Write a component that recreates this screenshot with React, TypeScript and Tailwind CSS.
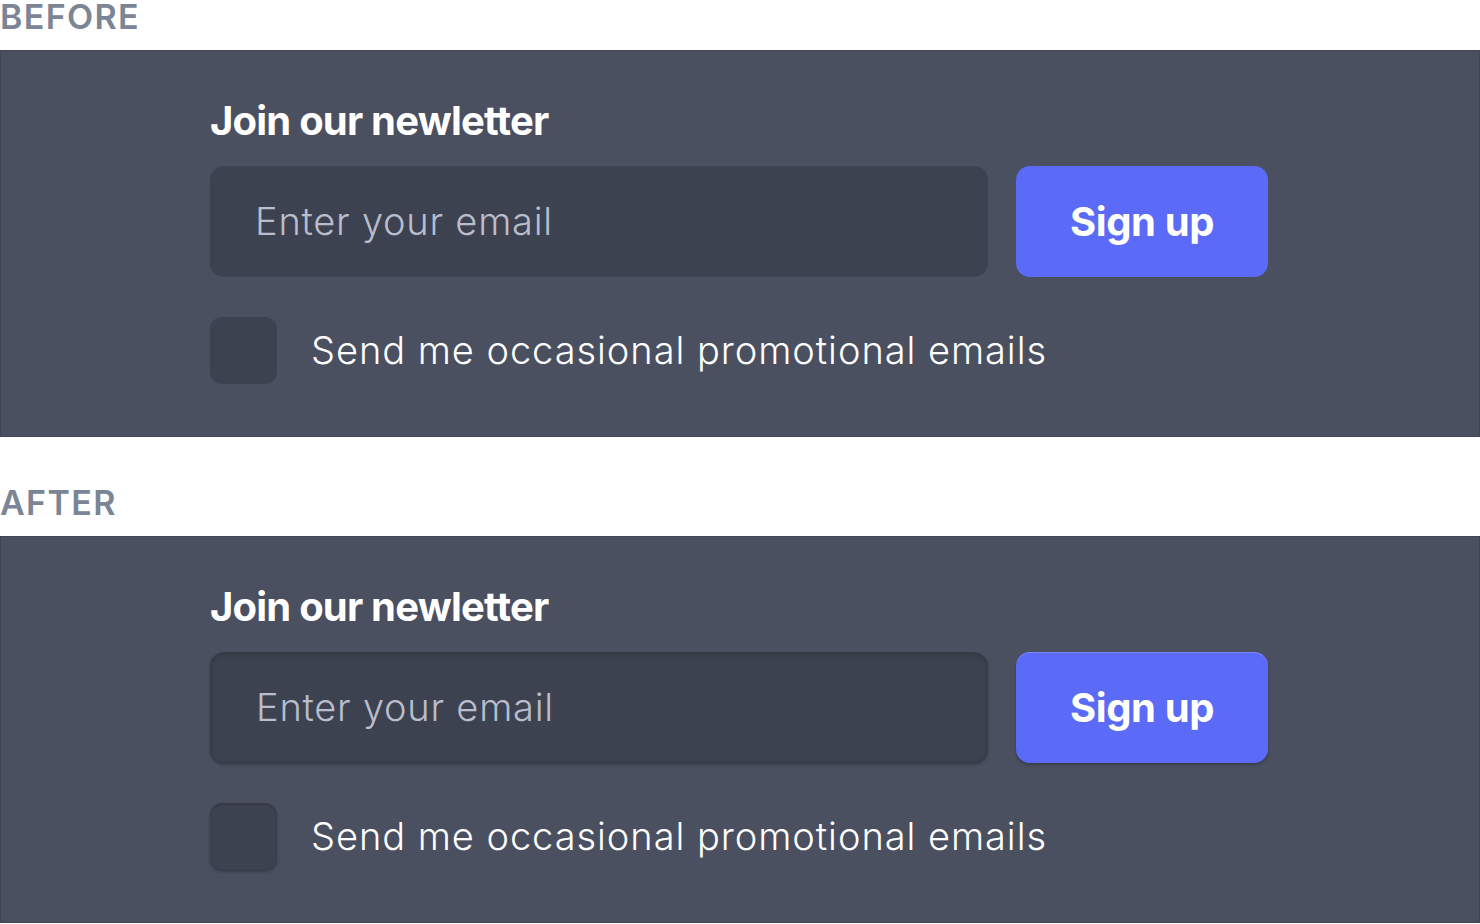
import React from "react";

const font = { fontFamily: "Inter, 'Noto Sans', sans-serif" };

function Label({ text }: { text: string }) {
  return (
    <div className="h-[50px] text-[34px] leading-[34px] font-semibold tracking-[0.04em] text-[#7b8595]">
      {text}
    </div>
  );
}

function Newsletter({ after }: { after?: boolean }) {
  return (
    <div className="h-[387px] bg-[#4a5060] border border-[#404553] pl-[209px] pt-[50px]">
      <h2 className="text-[40px] leading-[40px] font-bold tracking-[-0.02em] text-white">
        Join our newletter
      </h2>
      <div className="mt-[25px] flex gap-[28px]">
        <div
          className={
            "w-[778px] h-[111px] rounded-[14px] bg-[#3d4250] flex items-center pl-[45px] " +
            (after
              ? "border border-[#363b48] shadow-[0_2px_3px_rgba(0,0,0,0.25),inset_0_2px_4px_rgba(0,0,0,0.15)]"
              : "")
          }
        >
          <span className="text-[38px] font-light text-[#b9bdcc] tracking-[0.02em]">Enter your email</span>
        </div>
        <button
          className={
            "w-[252px] h-[111px] rounded-[14px] bg-[#5b6bf8] text-white text-[40px] font-bold tracking-[-0.01em] " +
            (after ? "shadow-[0_2px_3px_rgba(0,0,0,0.25),inset_0_1px_0_rgba(255,255,255,0.2)]" : "")
          }
        >
          Sign up
        </button>
      </div>
      <div className="mt-[40px] flex items-center gap-[34px]">
        <div
          className={
            "w-[67px] h-[67px] rounded-[12px] bg-[#3d4250] " +
            (after ? "shadow-[0_2px_3px_rgba(0,0,0,0.25),inset_0_2px_3px_rgba(0,0,0,0.12)]" : "")
          }
        />
        <span className="text-[38px] font-light text-white tracking-[0.025em]">
          Send me occasional promotional emails
        </span>
      </div>
    </div>
  );
}

export default function App() {
  return (
    <div className="w-full h-[924px] bg-white overflow-hidden" style={font}>
      <Label text="BEFORE" />
      <Newsletter />
      <div className="h-[49px]" />
      <Label text="AFTER" />
      <Newsletter after />
    </div>
  );
}
